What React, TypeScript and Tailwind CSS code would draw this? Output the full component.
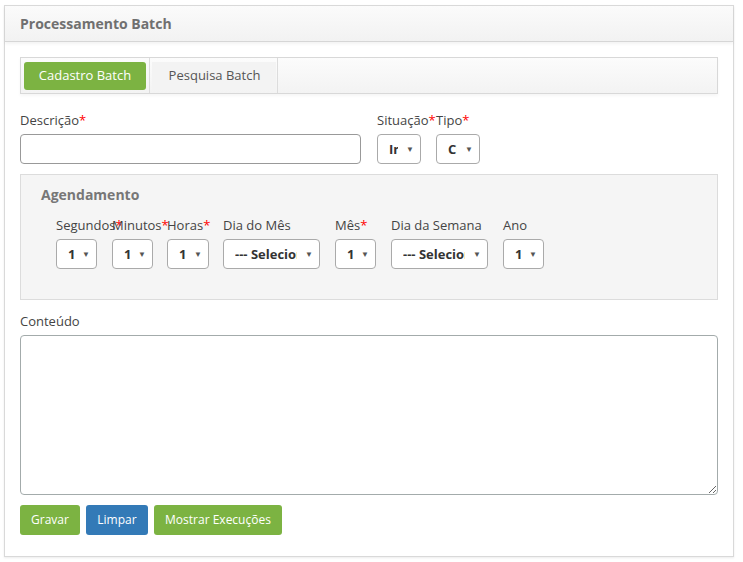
import React from "react";

const font = { fontFamily: '"Open Sans", "Noto Sans", sans-serif' };

// select fechado, texto cortado como no original
const FakeSelect = ({ value, w }: { value: string; w: string }) => (
  <div
    className={`${w} h-[30px] flex items-center rounded-[4px] border border-[#aaa] bg-white pl-[11px] pr-[7px] overflow-hidden`}
  >
    <span className="flex-1 min-w-0 text-[13px] font-bold text-[#333] whitespace-nowrap overflow-hidden leading-none">
      {value}
    </span>
    <span className="ml-[8px] w-[7px] text-[8px] text-[#555] shrink-0 leading-none">▼</span>
  </div>
);

const Req = () => <span className="text-[#f00]">*</span>;

const Field = ({ label, req, value, w }: { label: string; req?: boolean; value: string; w: string }) => (
  <div className={`${w} flex flex-col shrink-0`}>
    <div className="h-[20px] text-[13px] text-[#444] whitespace-nowrap leading-[20px]">
      {label}
      {req && <Req />}
    </div>
    <div className="mt-[4px]">
      <FakeSelect value={value} w={w} />
    </div>
  </div>
);

export default function App() {
  return (
    <div className="w-[743px] h-[562px] bg-white pt-[5px] pl-[4px]" style={font}>
      <div className="w-[730px] h-[552px] border border-[#d9d9d9] bg-white shadow-[0_1px_2px_rgba(0,0,0,0.08)]">
        {/* cabeçalho */}
        <div className="h-[36px] bg-gradient-to-b from-[#fbfbfb] to-[#f2f2f2] border-b border-[#d6d6d6] shadow-[0_2px_3px_rgba(0,0,0,0.05)] flex items-center pl-[15px]">
          <span className="text-[14px] font-bold text-[#707070]">Processamento Batch</span>
        </div>

        <div className="px-[15px] pt-[15px]">
          {/* abas */}
          <div className="h-[37px] border border-[#d8d8d8] bg-gradient-to-b from-[#fcfcfc] to-[#f3f3f3] flex items-stretch shadow-[0_2px_3px_rgba(0,0,0,0.04)]">
            <div className="flex items-center pl-[3px] pr-[3px] border-r border-[#dcdcdc]">
              <div className="h-[28px] w-[122px] rounded-[3px] bg-[#7cb342] flex items-center justify-center text-[13px] text-white">
                Cadastro Batch
              </div>
            </div>
            <div className="w-[128px] border-r border-[#dcdcdc] flex items-center justify-center">
              <div className="h-[28px] w-[124px] bg-[#f3f3f3] flex items-center justify-center text-[13px] text-[#555] pl-[2px]">
                Pesquisa Batch
              </div>
            </div>
          </div>

          {/* descrição / situação / tipo */}
          <div className="flex mt-[16px]">
            <div className="w-[341px] flex flex-col">
              <div className="h-[20px] text-[13px] text-[#444] leading-[20px]">
                Descrição
                <Req />
              </div>
              <div className="mt-[4px] h-[30px] rounded-[4px] border border-[#999] bg-white" />
            </div>
            <div className="ml-[16px]">
              <Field label="Situação" req value="Inativo" w="w-[44px]" />
            </div>
            <div className="ml-[15px]">
              <Field label="Tipo" req value="CRON" w="w-[44px]" />
            </div>
          </div>

          {/* agendamento */}
          <div className="mt-[10px] h-[126px] border border-[#dcdcdc] bg-[#f5f5f5] pl-[20px] pt-[10px]">
            <div className="text-[14px] font-bold text-[#777] leading-[20px]">Agendamento</div>
            <div className="flex pl-[15px] mt-[10px]">
              <Field label="Segundos" req value="1" w="w-[41px]" />
              <div className="ml-[15px]">
                <Field label="Minutos" req value="1" w="w-[41px]" />
              </div>
              <div className="ml-[14px]">
                <Field label="Horas" req value="1" w="w-[42px]" />
              </div>
              <div className="ml-[14px]">
                <Field label="Dia do Mês" value="--- Selecione ---" w="w-[97px]" />
              </div>
              <div className="ml-[15px]">
                <Field label="Mês" req value="1" w="w-[41px]" />
              </div>
              <div className="ml-[15px]">
                <Field label="Dia da Semana" value="--- Selecione ---" w="w-[97px]" />
              </div>
              <div className="ml-[15px]">
                <Field label="Ano" value="1" w="w-[41px]" />
              </div>
            </div>
          </div>

          {/* conteúdo */}
          <div className="mt-[11px] h-[20px] text-[13px] text-[#444] leading-[20px]">Conteúdo</div>
          <textarea className="mt-[4px] block w-[698px] h-[160px] rounded-[4px] border border-[#a3abab] bg-white outline-none" />

          {/* botões */}
          <div className="flex gap-[6px] mt-[10px]">
            <button className="h-[30px] w-[60px] rounded-[3px] bg-[#7cb342] text-white text-[12px]">Gravar</button>
            <button className="h-[30px] w-[62px] rounded-[3px] bg-[#337ab7] text-white text-[12px]">Limpar</button>
            <button className="h-[30px] w-[128px] rounded-[3px] bg-[#7cb342] text-white text-[12px]">
              Mostrar Execuções
            </button>
          </div>
        </div>
      </div>
    </div>
  );
}
